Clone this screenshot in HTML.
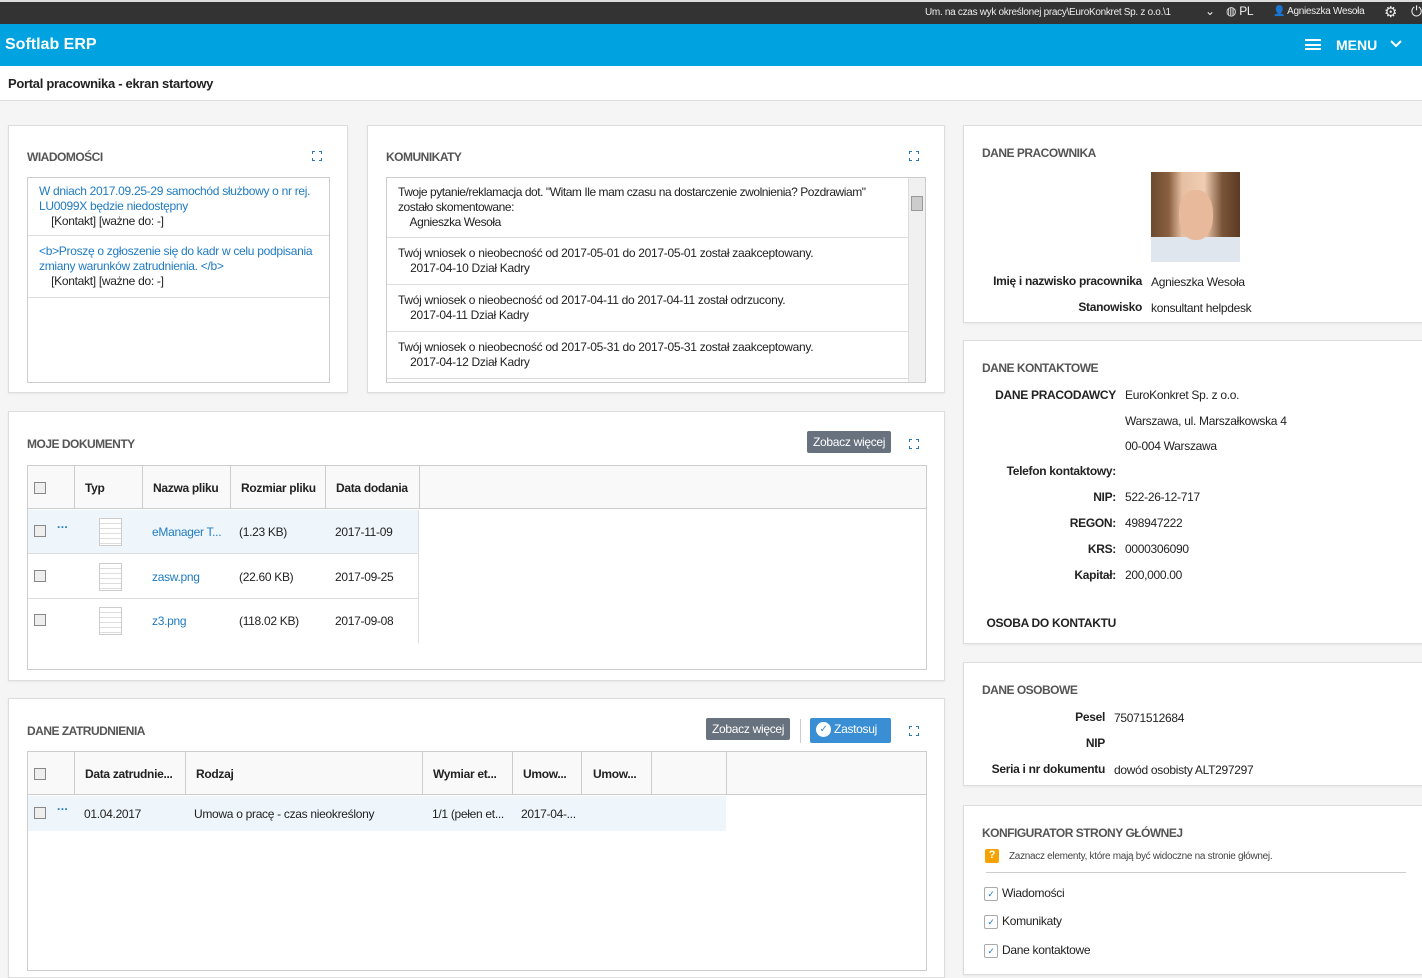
<!DOCTYPE html>
<html><head><meta charset="utf-8"><style>
*{box-sizing:border-box;margin:0;padding:0}
body{width:1422px;height:958px;overflow:hidden;background:#f5f5f5;font-family:"Liberation Sans",sans-serif;font-size:12px;color:#222;position:relative;letter-spacing:-0.3px}
.a{position:absolute}
.top{left:0;top:0;width:1422px;height:24px;background:#333;border-top:2px solid #ddd;color:#eee;font-size:10px}
.hdr{left:0;top:24px;width:1422px;height:42px;background:#00a3e0;color:#fff;letter-spacing:0}
.tb{left:0;top:66px;width:1422px;height:35px;background:#fff;border-bottom:1px solid #ddd;font-weight:bold;font-size:13px;padding:10px 8px}
.p{background:#fff;border:1px solid #ddd;box-shadow:0 1px 2px rgba(0,0,0,.06)}
.h{font-weight:bold;font-size:12px;color:#555;letter-spacing:-.5px}
.lnk{color:#1f7bc1}
.cb{width:12px;height:12px;border:1px solid #888;background:#eee}
.btn{background:#68717e;color:#fff;font-size:12px;padding:4px 6px;border-radius:2px}
.r{text-align:right;font-weight:bold}
.k{display:inline-block;vertical-align:middle;width:14px;height:14px;border:1px solid #aaa;border-radius:2px;background:#fff;color:#1f7bc1;font-size:9px;line-height:12px;text-align:center;margin-right:4px}
</style></head><body>
<svg width="0" height="0" style="position:absolute"><defs><symbol id="ex" viewBox="0 0 10 10"><path d="M0 3V0H3M7 0H10V3M10 7V10H7M3 10H0V7" fill="none" stroke="#2a7ab8" stroke-width="2"/></symbol></defs></svg>
<div class="a top"><span class="a" style="left:925px;top:5px">Um. na czas wyk określonej pracy\EuroKonkret Sp. z o.o.\1</span><span class="a" style="left:1205px;top:2px;font-size:12px">⌄</span><span class="a" style="left:1226px;top:2px;font-size:12px">◍ PL</span><span class="a" style="left:1273px;top:4px">👤 Agnieszka Wesoła</span><span class="a" style="left:1384px;top:1px;font-size:15px">⚙</span><span class="a" style="left:1411px;top:1px;font-size:14px">⏻</span></div>
<div class="a hdr"><span class="a" style="left:5px;top:12px;font-size:16px;font-weight:bold">Softlab ERP</span><span class="a" style="left:1305px;top:15px;width:16px;height:11px;border-top:2px solid #fff;border-bottom:2px solid #fff"></span><span class="a" style="left:1305px;top:20px;width:16px;height:2px;background:#fff"></span><span class="a" style="left:1336px;top:13px;font-size:14px;font-weight:bold">MENU</span><svg class="a" style="left:1390px;top:16px" width="12" height="8"><path d="M1 1L6 6L11 1" stroke="#fff" stroke-width="2" fill="none"/></svg></div>
<div class="a tb">Portal pracownika - ekran startowy</div>

<div class="a p" style="left:8px;top:125px;width:340px;height:268px">
<div class="a h" style="left:18px;top:24px">WIADOMOŚCI</div><svg class="a" style="left:303px;top:25px" width="10" height="10"><use href="#ex"/></svg>
<div class="a" style="left:18px;top:51px;width:303px;height:206px;border:1px solid #ccc;line-height:15px">
<div style="padding:6px 11px;border-bottom:1px solid #ddd"><span class="lnk">W dniach 2017.09.25-29 samochód służbowy o nr rej. LU0099X będzie niedostępny</span><br>&nbsp;&nbsp;&nbsp;&nbsp;[Kontakt] [ważne do: -]</div>
<div style="padding:8px 11px;border-bottom:1px solid #ddd"><span class="lnk">&lt;b&gt;Proszę o zgłoszenie się do kadr w celu podpisania zmiany warunków zatrudnienia. &lt;/b&gt;</span><br>&nbsp;&nbsp;&nbsp;&nbsp;[Kontakt] [ważne do: -]</div></div></div>

<div class="a p" style="left:367px;top:125px;width:578px;height:268px">
<div class="a h" style="left:18px;top:24px">KOMUNIKATY</div><svg class="a" style="left:541px;top:25px" width="10" height="10"><use href="#ex"/></svg>
<div class="a" style="left:18px;top:51px;width:540px;height:206px;border:1px solid #ccc;line-height:15px;overflow:hidden">
<div style="padding:7px 11px;border-bottom:1px solid #ddd;width:522px;letter-spacing:-.45px">Twoje pytanie/reklamacja dot. "Witam Ile mam czasu na dostarczenie zwolnienia? Pozdrawiam" zostało skomentowane:<br>&nbsp;&nbsp;&nbsp;&nbsp;Agnieszka Wesoła</div>
<div style="padding:8px 11px;border-bottom:1px solid #ddd;width:522px">Twój wniosek o nieobecność od 2017-05-01 do 2017-05-01 został zaakceptowany.<br>&nbsp;&nbsp;&nbsp;&nbsp;2017-04-10 Dział Kadry</div>
<div style="padding:8px 11px;border-bottom:1px solid #ddd;width:522px">Twój wniosek o nieobecność od 2017-04-11 do 2017-04-11 został odrzucony.<br>&nbsp;&nbsp;&nbsp;&nbsp;2017-04-11 Dział Kadry</div>
<div style="padding:8px 11px;border-bottom:1px solid #ddd;width:522px">Twój wniosek o nieobecność od 2017-05-31 do 2017-05-31 został zaakceptowany.<br>&nbsp;&nbsp;&nbsp;&nbsp;2017-04-12 Dział Kadry</div>
<div class="a" style="right:0;top:0;width:17px;height:204px;background:#f0f0f0;border-left:1px solid #ddd"><div class="a" style="left:2px;top:18px;width:12px;height:15px;background:#ccc;border:1px solid #999"></div></div></div></div>

<div class="a p" style="left:963px;top:125px;width:470px;height:198px">
<div class="a h" style="left:18px;top:20px">DANE PRACOWNIKA</div>
<div class="a" style="left:187px;top:46px;width:89px;height:90px;background:linear-gradient(90deg,#6b4a30 0,#8a6040 20%,#e6bfa2 35%,#f0cdb3 60%,#7a5437 80%,#5a3a25 100%)"><div class="a" style="left:0;bottom:0;width:89px;height:25px;background:#dfe6ee"></div><div class="a" style="left:28px;top:18px;width:34px;height:50px;border-radius:45%;background:#e8b99a"></div></div>
<div class="a r" style="left:0;top:148px;width:178px">Imię i nazwisko pracownika</div><div class="a" style="left:187px;top:149px">Agnieszka Wesoła</div>
<div class="a r" style="left:0;top:174px;width:178px">Stanowisko</div><div class="a" style="left:187px;top:175px">konsultant helpdesk</div></div>

<div class="a p" style="left:963px;top:340px;width:470px;height:304px">
<div class="a h" style="left:18px;top:20px">DANE KONTAKTOWE</div>
<div class="a r" style="left:0;top:47px;width:152px">DANE PRACODAWCY</div><div class="a" style="left:161px;top:47px">EuroKonkret Sp. z o.o.</div>
<div class="a" style="left:161px;top:73px">Warszawa, ul. Marszałkowska 4</div>
<div class="a" style="left:161px;top:98px">00-004 Warszawa</div>
<div class="a r" style="left:0;top:123px;width:152px">Telefon kontaktowy:</div>
<div class="a r" style="left:0;top:149px;width:152px">NIP:</div><div class="a" style="left:161px;top:149px">522-26-12-717</div>
<div class="a r" style="left:0;top:175px;width:152px">REGON:</div><div class="a" style="left:161px;top:175px">498947222</div>
<div class="a r" style="left:0;top:201px;width:152px">KRS:</div><div class="a" style="left:161px;top:201px">0000306090</div>
<div class="a r" style="left:0;top:227px;width:152px">Kapitał:</div><div class="a" style="left:161px;top:227px">200,000.00</div>
<div class="a r" style="left:0;top:275px;width:152px">OSOBA DO KONTAKTU</div></div>

<div class="a p" style="left:963px;top:662px;width:470px;height:124px">
<div class="a h" style="left:18px;top:20px">DANE OSOBOWE</div>
<div class="a r" style="left:0;top:47px;width:141px">Pesel</div><div class="a" style="left:150px;top:48px">75071512684</div>
<div class="a r" style="left:0;top:73px;width:141px">NIP</div>
<div class="a r" style="left:0;top:99px;width:141px">Seria i nr dokumentu</div><div class="a" style="left:150px;top:100px">dowód osobisty ALT297297</div></div>

<div class="a p" style="left:963px;top:805px;width:470px;height:170px">
<div class="a h" style="left:18px;top:20px">KONFIGURATOR STRONY GŁÓWNEJ</div>
<div class="a" style="left:21px;top:43px;width:14px;height:14px;background:#f5a300;color:#fff;font-weight:bold;font-size:11px;text-align:center;border-radius:2px">?</div>
<div class="a" style="left:45px;top:45px;font-size:10px;color:#444">Zaznacz elementy, które mają być widoczne na stronie głównej.</div>
<div class="a" style="left:22px;top:66px;width:420px;height:1px;background:#ccc"></div>
<div class="a" style="left:20px;top:80px"><span class="k">✓</span>Wiadomości</div>
<div class="a" style="left:20px;top:108px"><span class="k">✓</span>Komunikaty</div>
<div class="a" style="left:20px;top:137px"><span class="k">✓</span>Dane kontaktowe</div></div>

<div class="a p" style="left:8px;top:411px;width:937px;height:270px">
<div class="a h" style="left:18px;top:25px">MOJE DOKUMENTY</div>
<div class="a btn" style="left:798px;top:19px">Zobacz więcej</div><svg class="a" style="left:900px;top:27px" width="10" height="10"><use href="#ex"/></svg>
<div class="a" style="left:18px;top:53px;width:900px;height:205px;border:1px solid #ccc">
<div class="a" style="left:0;top:0;width:898px;height:43px;background:#f9f9f9;border-bottom:1px solid #ccc"></div>
<div class="a cb" style="left:6px;top:16px"></div>
<div class="a" style="left:46px;top:0;width:1px;height:43px;background:#ccc"></div>
<div class="a" style="left:114px;top:0;width:1px;height:43px;background:#ccc"></div>
<div class="a" style="left:202px;top:0;width:1px;height:43px;background:#ccc"></div>
<div class="a" style="left:297px;top:0;width:1px;height:43px;background:#ccc"></div>
<div class="a" style="left:391px;top:0;width:1px;height:43px;background:#ccc"></div>
<b class="a" style="left:57px;top:15px">Typ</b><b class="a" style="left:125px;top:15px">Nazwa pliku</b><b class="a" style="left:213px;top:15px">Rozmiar pliku</b><b class="a" style="left:308px;top:15px">Data dodania</b>
<div class="a" style="left:0;top:44px;width:390px;height:44px;background:#eef6fc;border-bottom:1px solid #ddd"></div>
<div class="a" style="left:0;top:89px;width:390px;height:44px;border-bottom:1px solid #ddd"></div>
<div class="a" style="left:390px;top:44px;width:1px;height:133px;background:#ddd"></div>
<div class="a cb" style="left:6px;top:59px"></div><div class="a cb" style="left:6px;top:104px"></div><div class="a cb" style="left:6px;top:148px"></div>
<div class="a lnk" style="left:29px;top:54px;font-weight:bold">···</div>
<div class="a" style="left:71px;top:52px;width:23px;height:28px;border:1px solid #ccc;background:repeating-linear-gradient(#fff 0 4px,#ddd 4px 5px)"></div>
<div class="a" style="left:71px;top:97px;width:23px;height:28px;border:1px solid #ccc;background:repeating-linear-gradient(#fff 0 4px,#ddd 4px 5px)"></div>
<div class="a" style="left:71px;top:141px;width:23px;height:28px;border:1px solid #ccc;background:repeating-linear-gradient(#fff 0 4px,#ddd 4px 5px)"></div>
<span class="a lnk" style="left:124px;top:59px">eManager T...</span><span class="a" style="left:211px;top:59px">(1.23 KB)</span><span class="a" style="left:307px;top:59px">2017-11-09</span>
<span class="a lnk" style="left:124px;top:104px">zasw.png</span><span class="a" style="left:211px;top:104px">(22.60 KB)</span><span class="a" style="left:307px;top:104px">2017-09-25</span>
<span class="a lnk" style="left:124px;top:148px">z3.png</span><span class="a" style="left:211px;top:148px">(118.02 KB)</span><span class="a" style="left:307px;top:148px">2017-09-08</span>
</div></div>

<div class="a p" style="left:8px;top:698px;width:937px;height:280px">
<div class="a h" style="left:18px;top:25px">DANE ZATRUDNIENIA</div>
<div class="a btn" style="left:697px;top:19px">Zobacz więcej</div>
<div class="a" style="left:791px;top:20px;width:1px;height:24px;background:#ccc"></div>
<div class="a" style="left:801px;top:19px;background:#3a8ed4;color:#fff;padding:4px 6px;border-radius:2px;width:81px;height:25px"><span style="display:inline-block;width:15px;height:15px;border-radius:50%;background:#fff;color:#3a8ed4;font-size:10px;text-align:center;line-height:15px;vertical-align:middle">✓</span> Zastosuj</div>
<svg class="a" style="left:900px;top:27px" width="10" height="10"><use href="#ex"/></svg>
<div class="a" style="left:18px;top:52px;width:900px;height:220px;border:1px solid #ccc">
<div class="a" style="left:0;top:0;width:898px;height:43px;background:#f9f9f9;border-bottom:1px solid #ccc"></div>
<div class="a cb" style="left:6px;top:16px"></div>
<div class="a" style="left:46px;top:0;width:1px;height:43px;background:#ccc"></div>
<div class="a" style="left:157px;top:0;width:1px;height:43px;background:#ccc"></div>
<div class="a" style="left:394px;top:0;width:1px;height:43px;background:#ccc"></div>
<div class="a" style="left:484px;top:0;width:1px;height:43px;background:#ccc"></div>
<div class="a" style="left:553px;top:0;width:1px;height:43px;background:#ccc"></div>
<div class="a" style="left:623px;top:0;width:1px;height:43px;background:#ccc"></div>
<div class="a" style="left:698px;top:0;width:1px;height:43px;background:#ccc"></div>
<b class="a" style="left:57px;top:15px">Data zatrudnie...</b><b class="a" style="left:168px;top:15px">Rodzaj</b><b class="a" style="left:405px;top:15px">Wymiar et...</b><b class="a" style="left:495px;top:15px">Umow...</b><b class="a" style="left:565px;top:15px">Umow...</b>
<div class="a" style="left:0;top:44px;width:698px;height:35px;background:#eef6fc"></div>
<div class="a cb" style="left:6px;top:55px"></div><div class="a lnk" style="left:29px;top:50px;font-weight:bold">···</div>
<span class="a" style="left:56px;top:55px">01.04.2017</span><span class="a" style="left:166px;top:55px">Umowa o pracę - czas nieokreślony</span><span class="a" style="left:404px;top:55px">1/1 (pełen et...</span><span class="a" style="left:493px;top:55px">2017-04-...</span>
</div></div>
</body></html>
